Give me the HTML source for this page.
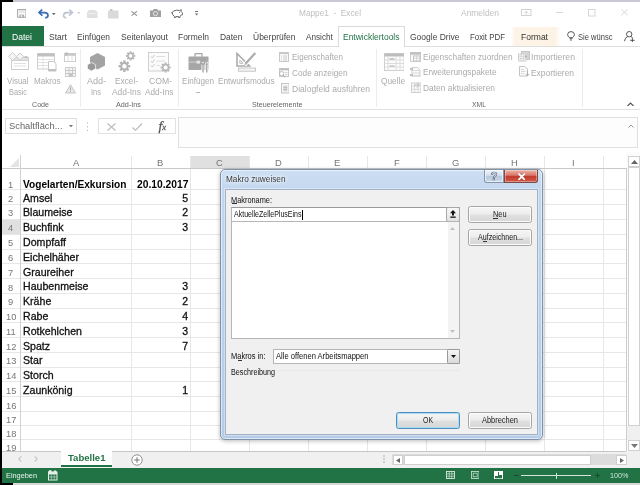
<!DOCTYPE html>
<html lang="de"><head><meta charset="utf-8"><title>Mappe1 - Excel</title>
<style>
html,body{margin:0;padding:0;}
body{width:640px;height:485px;overflow:hidden;position:relative;background:#fff;font-family:'Liberation Sans', sans-serif;}
#app{position:absolute;left:0;top:0;width:640px;height:485px;overflow:hidden;filter:blur(0.4px);}
#app div,#app svg,#app span{position:absolute;box-sizing:border-box;}
.t{white-space:nowrap;transform-origin:0 50%;}
</style></head>
<body><div id="app">
<div style="left:0px;top:0px;width:640px;height:485px;background:#fff;"></div>
<span class="t" style="left:299.00px;top:6.50px;font-size:9.5px;line-height:12px;color:#c0c0c0;transform:scaleX(0.8696);">Mappe1 &nbsp;-&nbsp; Excel</span>
<span class="t" style="left:461.00px;top:6.50px;font-size:9.5px;line-height:12px;color:#c0c0c0;transform:scaleX(0.8882);">Anmelden</span>
<div style="left:1.5px;top:26px;width:42px;height:20.5px;background:#217346;"></div>
<span class="t" style="left:12.00px;top:31.00px;font-size:9px;line-height:12px;color:#fff;transform:scaleX(0.9517);">Datei</span>
<span class="t" style="left:49.00px;top:31.00px;font-size:9px;line-height:12px;color:#444;transform:scaleX(0.9466);">Start</span>
<span class="t" style="left:77.00px;top:31.00px;font-size:9px;line-height:12px;color:#444;transform:scaleX(0.9288);">Einfügen</span>
<span class="t" style="left:121.00px;top:31.00px;font-size:9px;line-height:12px;color:#444;transform:scaleX(0.9486);">Seitenlayout</span>
<span class="t" style="left:178.00px;top:31.00px;font-size:9px;line-height:12px;color:#444;transform:scaleX(0.9389);">Formeln</span>
<span class="t" style="left:220.00px;top:31.00px;font-size:9px;line-height:12px;color:#444;transform:scaleX(0.9363);">Daten</span>
<span class="t" style="left:252.50px;top:31.00px;font-size:9px;line-height:12px;color:#444;transform:scaleX(0.9438);">Überprüfen</span>
<span class="t" style="left:305.70px;top:31.00px;font-size:9px;line-height:12px;color:#444;transform:scaleX(0.9080);">Ansicht</span>
<span class="t" style="left:410.00px;top:31.00px;font-size:9px;line-height:12px;color:#444;transform:scaleX(0.9423);">Google Drive</span>
<span class="t" style="left:470.00px;top:31.00px;font-size:9px;line-height:12px;color:#444;transform:scaleX(0.8747);">Foxit PDF</span>
<div style="left:511px;top:27px;width:50px;height:19.5px;background:linear-gradient(90deg,#fff 0%,#fdf4e7 8%,#fdf3e5 88%,#fff 100%);"></div>
<span class="t" style="left:521.00px;top:31.00px;font-size:9px;line-height:12px;color:#333;transform:scaleX(0.9468);">Format</span>
<span class="t" style="left:578.00px;top:31.00px;font-size:9px;line-height:12px;color:#444;transform:scaleX(0.8408);">Sie wünsc</span>
<div style="left:0px;top:46px;width:640px;height:1px;background:#dddddd;"></div>
<div style="left:338px;top:26px;width:66.5px;height:21px;background:#fff;border:1px solid #dadada;border-bottom:none;"></div>
<span class="t" style="left:343.00px;top:31.00px;font-size:9px;line-height:12px;color:#217346;transform:scaleX(0.9412);">Entwicklertools</span>
<div style="left:0px;top:109.3px;width:640px;height:1px;background:#e2e2e2;"></div>
<div style="left:79.5px;top:49px;width:1px;height:58px;background:#ececec;"></div>
<div style="left:177.5px;top:49px;width:1px;height:58px;background:#ececec;"></div>
<div style="left:376px;top:49px;width:1px;height:58px;background:#ececec;"></div>
<div style="left:582px;top:49px;width:1px;height:58px;background:#ececec;"></div>
<span class="t" style="left:6.55px;top:74.50px;font-size:9px;line-height:12px;color:#ababab;transform:scaleX(0.8826);">Visual</span>
<span class="t" style="left:9.00px;top:86.00px;font-size:9px;line-height:12px;color:#ababab;transform:scaleX(0.8176);">Basic</span>
<span class="t" style="left:33.95px;top:74.50px;font-size:9px;line-height:12px;color:#ababab;transform:scaleX(0.8978);">Makros</span>
<span class="t" style="left:87.00px;top:74.50px;font-size:9px;line-height:12px;color:#ababab;">Add-</span>
<span class="t" style="left:91.00px;top:86.00px;font-size:9px;line-height:12px;color:#ababab;transform:scaleX(0.8322);">Ins</span>
<span class="t" style="left:115.00px;top:74.50px;font-size:9px;line-height:12px;color:#ababab;transform:scaleX(0.9194);">Excel-</span>
<span class="t" style="left:112.00px;top:86.00px;font-size:9px;line-height:12px;color:#ababab;transform:scaleX(0.9345);">Add-Ins</span>
<span class="t" style="left:148.50px;top:74.50px;font-size:9px;line-height:12px;color:#ababab;transform:scaleX(0.9583);">COM-</span>
<span class="t" style="left:145.05px;top:86.00px;font-size:9px;line-height:12px;color:#ababab;transform:scaleX(0.9184);">Add-Ins</span>
<span class="t" style="left:182.00px;top:74.50px;font-size:9px;line-height:12px;color:#ababab;transform:scaleX(0.9006);">Einfügen</span>
<span class="t" style="left:218.05px;top:74.50px;font-size:9px;line-height:12px;color:#ababab;transform:scaleX(0.9108);">Entwurfsmodus</span>
<span class="t" style="left:381.00px;top:74.50px;font-size:9px;line-height:12px;color:#ababab;transform:scaleX(0.9225);">Quelle</span>
<span class="t" style="left:292.00px;top:51.00px;font-size:9px;line-height:12px;color:#ababab;transform:scaleX(0.8940);">Eigenschaften</span>
<span class="t" style="left:292.00px;top:67.00px;font-size:9px;line-height:12px;color:#ababab;transform:scaleX(0.9164);">Code anzeigen</span>
<span class="t" style="left:292.00px;top:83.00px;font-size:9px;line-height:12px;color:#ababab;transform:scaleX(0.9447);">Dialogfeld ausführen</span>
<span class="t" style="left:422.50px;top:50.70px;font-size:9px;line-height:12px;color:#ababab;transform:scaleX(0.9219);">Eigenschaften zuordnen</span>
<span class="t" style="left:422.50px;top:66.00px;font-size:9px;line-height:12px;color:#ababab;transform:scaleX(0.9240);">Erweiterungspakete</span>
<span class="t" style="left:422.50px;top:81.50px;font-size:9px;line-height:12px;color:#ababab;transform:scaleX(0.9345);">Daten aktualisieren</span>
<span class="t" style="left:531.00px;top:51.00px;font-size:9px;line-height:12px;color:#ababab;transform:scaleX(0.9664);">Importieren</span>
<span class="t" style="left:531.00px;top:66.50px;font-size:9px;line-height:12px;color:#ababab;transform:scaleX(0.9341);">Exportieren</span>
<span class="t" style="left:32.00px;top:99.50px;font-size:7.5px;line-height:10px;color:#666;transform:scaleX(0.9477);">Code</span>
<span class="t" style="left:116.00px;top:99.50px;font-size:7.5px;line-height:10px;color:#666;transform:scaleX(0.9668);">Add-Ins</span>
<span class="t" style="left:251.75px;top:99.50px;font-size:7.5px;line-height:10px;color:#666;transform:scaleX(0.9537);">Steuerelemente</span>
<span class="t" style="left:472.00px;top:99.50px;font-size:7.5px;line-height:10px;color:#666;transform:scaleX(0.9078);">XML</span>
<div style="left:0px;top:110.5px;width:640px;height:41.5px;background:#fff;"></div>
<div style="left:5px;top:117.8px;width:72px;height:16.7px;background:#fff;border:1px solid #dedede;"></div>
<span class="t" style="left:9.00px;top:120.30px;font-size:9.5px;line-height:12px;color:#686868;transform:scaleX(0.9836);">Schaltfläch...</span>
<div style="left:98px;top:117.8px;width:78px;height:16.7px;background:#fff;border:1px solid #e2e2e2;"></div>
<div style="left:178px;top:117px;width:460px;height:31px;background:#fdfdfd;border:1px solid #e0e0e0;"></div>
<span class="t" style="left:158.50px;top:116.50px;font-size:13.5px;line-height:18px;color:#555;font-family:'Liberation Serif', serif;font-style:italic;-webkit-text-stroke:0.3px #555;">f</span>
<span class="t" style="left:162.30px;top:122.00px;font-size:8.5px;line-height:11px;color:#555;font-family:'Liberation Serif', serif;font-style:italic;-webkit-text-stroke:0.3px #555;">x</span>
<div style="left:0px;top:155px;width:626px;height:295.5px;background:#fff;"></div>
<div style="left:190px;top:155.5px;width:59px;height:12.5px;background:#e0e0e0;"></div>
<div style="left:1.5px;top:219px;width:19px;height:15px;background:#e0e0e0;"></div>
<div style="left:20.0px;top:156px;width:1px;height:294.5px;background:#e7e7e7;"></div>
<div style="left:130.5px;top:156px;width:1px;height:294.5px;background:#e7e7e7;"></div>
<div style="left:189.5px;top:156px;width:1px;height:294.5px;background:#e7e7e7;"></div>
<div style="left:248.5px;top:156px;width:1px;height:294.5px;background:#e7e7e7;"></div>
<div style="left:307.5px;top:156px;width:1px;height:294.5px;background:#e7e7e7;"></div>
<div style="left:366.5px;top:156px;width:1px;height:294.5px;background:#e7e7e7;"></div>
<div style="left:425.5px;top:156px;width:1px;height:294.5px;background:#e7e7e7;"></div>
<div style="left:485.0px;top:156px;width:1px;height:294.5px;background:#e7e7e7;"></div>
<div style="left:543.5px;top:156px;width:1px;height:294.5px;background:#e7e7e7;"></div>
<div style="left:603.0px;top:156px;width:1px;height:294.5px;background:#e7e7e7;"></div>
<div style="left:1.5px;top:168.0px;width:624px;height:1px;background:#e7e7e7;"></div>
<div style="left:1.5px;top:189.0px;width:624px;height:1px;background:#e7e7e7;"></div>
<div style="left:1.5px;top:203.5px;width:624px;height:1px;background:#e7e7e7;"></div>
<div style="left:1.5px;top:218.5px;width:624px;height:1px;background:#e7e7e7;"></div>
<div style="left:1.5px;top:233.5px;width:624px;height:1px;background:#e7e7e7;"></div>
<div style="left:1.5px;top:248.5px;width:624px;height:1px;background:#e7e7e7;"></div>
<div style="left:1.5px;top:263.0px;width:624px;height:1px;background:#e7e7e7;"></div>
<div style="left:1.5px;top:277.7px;width:624px;height:1px;background:#e7e7e7;"></div>
<div style="left:1.5px;top:292.5px;width:624px;height:1px;background:#e7e7e7;"></div>
<div style="left:1.5px;top:307.5px;width:624px;height:1px;background:#e7e7e7;"></div>
<div style="left:1.5px;top:322.0px;width:624px;height:1px;background:#e7e7e7;"></div>
<div style="left:1.5px;top:337.0px;width:624px;height:1px;background:#e7e7e7;"></div>
<div style="left:1.5px;top:351.5px;width:624px;height:1px;background:#e7e7e7;"></div>
<div style="left:1.5px;top:366.5px;width:624px;height:1px;background:#e7e7e7;"></div>
<div style="left:1.5px;top:381.1px;width:624px;height:1px;background:#e7e7e7;"></div>
<div style="left:1.5px;top:396.0px;width:624px;height:1px;background:#e7e7e7;"></div>
<div style="left:1.5px;top:410.5px;width:624px;height:1px;background:#e7e7e7;"></div>
<div style="left:1.5px;top:424.8px;width:624px;height:1px;background:#e7e7e7;"></div>
<div style="left:1.5px;top:439.2px;width:624px;height:1px;background:#e7e7e7;"></div>
<div style="left:1.5px;top:168.0px;width:624px;height:1px;background:#c9c9c9;"></div>
<div style="left:20px;top:155px;width:1px;height:295.5px;background:#d2d2d2;"></div>
<svg style="left:9.5px;top:157.5px;" width="10" height="10" viewBox="0 0 10 10"><path d="M9 0 L9 9 L0 9 Z" fill="#e4e4e4"/></svg>
<span class="t" style="left:72.62px;top:155.70px;font-size:9.9px;line-height:13px;color:#747474;transform:scaleX(0.9500);">A</span>
<span class="t" style="left:157.37px;top:155.70px;font-size:9.9px;line-height:13px;color:#747474;transform:scaleX(0.9500);">B</span>
<span class="t" style="left:216.11px;top:155.70px;font-size:9.9px;line-height:13px;color:#747474;transform:scaleX(0.9500);">C</span>
<span class="t" style="left:275.11px;top:155.70px;font-size:9.9px;line-height:13px;color:#747474;transform:scaleX(0.9500);">D</span>
<span class="t" style="left:334.37px;top:155.70px;font-size:9.9px;line-height:13px;color:#747474;transform:scaleX(0.9500);">E</span>
<span class="t" style="left:393.63px;top:155.70px;font-size:9.9px;line-height:13px;color:#747474;transform:scaleX(0.9500);">F</span>
<span class="t" style="left:452.10px;top:155.70px;font-size:9.9px;line-height:13px;color:#747474;transform:scaleX(0.9500);">G</span>
<span class="t" style="left:511.36px;top:155.70px;font-size:9.9px;line-height:13px;color:#747474;transform:scaleX(0.9500);">H</span>
<span class="t" style="left:572.44px;top:155.70px;font-size:9.9px;line-height:13px;color:#747474;transform:scaleX(0.9500);">I</span>
<span class="t" style="left:8.21px;top:177.90px;font-size:9.8px;line-height:13px;color:#767676;transform:scaleX(0.9500);">1</span>
<span class="t" style="left:8.21px;top:191.65px;font-size:9.8px;line-height:13px;color:#767676;transform:scaleX(0.9500);">2</span>
<span class="t" style="left:8.21px;top:206.40px;font-size:9.8px;line-height:13px;color:#767676;transform:scaleX(0.9500);">3</span>
<span class="t" style="left:8.21px;top:221.40px;font-size:9.8px;line-height:13px;color:#767676;transform:scaleX(0.9500);">4</span>
<span class="t" style="left:8.21px;top:236.40px;font-size:9.8px;line-height:13px;color:#767676;transform:scaleX(0.9500);">5</span>
<span class="t" style="left:8.21px;top:251.15px;font-size:9.8px;line-height:13px;color:#767676;transform:scaleX(0.9500);">6</span>
<span class="t" style="left:8.21px;top:265.75px;font-size:9.8px;line-height:13px;color:#767676;transform:scaleX(0.9500);">7</span>
<span class="t" style="left:8.21px;top:280.50px;font-size:9.8px;line-height:13px;color:#767676;transform:scaleX(0.9500);">8</span>
<span class="t" style="left:8.21px;top:295.40px;font-size:9.8px;line-height:13px;color:#767676;transform:scaleX(0.9500);">9</span>
<span class="t" style="left:5.62px;top:310.15px;font-size:9.8px;line-height:13px;color:#767676;transform:scaleX(0.9500);">10</span>
<span class="t" style="left:5.97px;top:324.90px;font-size:9.8px;line-height:13px;color:#767676;transform:scaleX(0.9500);">11</span>
<span class="t" style="left:5.62px;top:339.65px;font-size:9.8px;line-height:13px;color:#767676;transform:scaleX(0.9500);">12</span>
<span class="t" style="left:5.62px;top:354.40px;font-size:9.8px;line-height:13px;color:#767676;transform:scaleX(0.9500);">13</span>
<span class="t" style="left:5.62px;top:369.20px;font-size:9.8px;line-height:13px;color:#767676;transform:scaleX(0.9500);">14</span>
<span class="t" style="left:5.62px;top:383.95px;font-size:9.8px;line-height:13px;color:#767676;transform:scaleX(0.9500);">15</span>
<span class="t" style="left:5.62px;top:398.65px;font-size:9.8px;line-height:13px;color:#767676;transform:scaleX(0.9500);">16</span>
<span class="t" style="left:5.62px;top:413.05px;font-size:9.8px;line-height:13px;color:#767676;transform:scaleX(0.9500);">17</span>
<span class="t" style="left:5.62px;top:427.40px;font-size:9.8px;line-height:13px;color:#767676;transform:scaleX(0.9500);">18</span>
<span class="t" style="left:5.62px;top:440.50px;font-size:9.8px;line-height:13px;color:#767676;transform:scaleX(0.9500);">19</span>
<span class="t" style="left:22.50px;top:176.80px;font-size:10.5px;line-height:14px;color:#000;font-weight:bold;transform:scaleX(0.9657);">Vogelarten/Exkursion</span>
<span class="t" style="left:136.50px;top:176.80px;font-size:10.5px;line-height:14px;color:#000;font-weight:bold;transform:scaleX(0.9798);">20.10.2017</span>
<span class="t" style="left:23.00px;top:190.55px;font-size:10.5px;line-height:14px;color:#111;transform:scaleX(1.0100);-webkit-text-stroke:0.3px #111;">Amsel</span>
<span class="t" style="left:182.16px;top:190.55px;font-size:10.5px;line-height:14px;color:#111;-webkit-text-stroke:0.3px #111;">5</span>
<span class="t" style="left:23.00px;top:205.30px;font-size:10.5px;line-height:14px;color:#111;transform:scaleX(1.0100);-webkit-text-stroke:0.3px #111;">Blaumeise</span>
<span class="t" style="left:182.16px;top:205.30px;font-size:10.5px;line-height:14px;color:#111;-webkit-text-stroke:0.3px #111;">2</span>
<span class="t" style="left:23.00px;top:220.30px;font-size:10.5px;line-height:14px;color:#111;transform:scaleX(1.0100);-webkit-text-stroke:0.3px #111;">Buchfink</span>
<span class="t" style="left:182.16px;top:220.30px;font-size:10.5px;line-height:14px;color:#111;-webkit-text-stroke:0.3px #111;">3</span>
<span class="t" style="left:23.00px;top:235.30px;font-size:10.5px;line-height:14px;color:#111;transform:scaleX(1.0100);-webkit-text-stroke:0.3px #111;">Dompfaff</span>
<span class="t" style="left:23.00px;top:250.05px;font-size:10.5px;line-height:14px;color:#111;transform:scaleX(1.0100);-webkit-text-stroke:0.3px #111;">Eichelhäher</span>
<span class="t" style="left:23.00px;top:264.65px;font-size:10.5px;line-height:14px;color:#111;transform:scaleX(1.0100);-webkit-text-stroke:0.3px #111;">Graureiher</span>
<span class="t" style="left:23.00px;top:279.40px;font-size:10.5px;line-height:14px;color:#111;transform:scaleX(1.0100);-webkit-text-stroke:0.3px #111;">Haubenmeise</span>
<span class="t" style="left:182.16px;top:279.40px;font-size:10.5px;line-height:14px;color:#111;-webkit-text-stroke:0.3px #111;">3</span>
<span class="t" style="left:23.00px;top:294.30px;font-size:10.5px;line-height:14px;color:#111;transform:scaleX(1.0100);-webkit-text-stroke:0.3px #111;">Krähe</span>
<span class="t" style="left:182.16px;top:294.30px;font-size:10.5px;line-height:14px;color:#111;-webkit-text-stroke:0.3px #111;">2</span>
<span class="t" style="left:23.00px;top:309.05px;font-size:10.5px;line-height:14px;color:#111;transform:scaleX(1.0100);-webkit-text-stroke:0.3px #111;">Rabe</span>
<span class="t" style="left:182.16px;top:309.05px;font-size:10.5px;line-height:14px;color:#111;-webkit-text-stroke:0.3px #111;">4</span>
<span class="t" style="left:23.00px;top:323.80px;font-size:10.5px;line-height:14px;color:#111;transform:scaleX(1.0100);-webkit-text-stroke:0.3px #111;">Rotkehlchen</span>
<span class="t" style="left:182.16px;top:323.80px;font-size:10.5px;line-height:14px;color:#111;-webkit-text-stroke:0.3px #111;">3</span>
<span class="t" style="left:23.00px;top:338.55px;font-size:10.5px;line-height:14px;color:#111;transform:scaleX(1.0100);-webkit-text-stroke:0.3px #111;">Spatz</span>
<span class="t" style="left:182.16px;top:338.55px;font-size:10.5px;line-height:14px;color:#111;-webkit-text-stroke:0.3px #111;">7</span>
<span class="t" style="left:23.00px;top:353.30px;font-size:10.5px;line-height:14px;color:#111;transform:scaleX(1.0100);-webkit-text-stroke:0.3px #111;">Star</span>
<span class="t" style="left:23.00px;top:368.10px;font-size:10.5px;line-height:14px;color:#111;transform:scaleX(1.0100);-webkit-text-stroke:0.3px #111;">Storch</span>
<span class="t" style="left:23.00px;top:382.85px;font-size:10.5px;line-height:14px;color:#111;transform:scaleX(1.0100);-webkit-text-stroke:0.3px #111;">Zaunkönig</span>
<span class="t" style="left:182.16px;top:382.85px;font-size:10.5px;line-height:14px;color:#111;-webkit-text-stroke:0.3px #111;">1</span>
<div style="left:626px;top:152px;width:14px;height:299px;background:#fbfbfb;"></div>
<div style="left:626px;top:426px;width:14px;height:14px;background:#f0f0f0;"></div>
<div style="left:625.5px;top:168px;width:1px;height:283px;background:#cdcdcd;"></div>
<div style="left:628px;top:156px;width:12px;height:11px;background:#fff;border:1px solid #d0d0d0;"></div>
<svg style="left:630.5px;top:159.5px;" width="7" height="4" viewBox="0 0 7 4"><path d="M0 4 L3.5 0 L7 4 Z" fill="#666"/></svg>
<div style="left:628px;top:167px;width:12px;height:259px;background:#fff;border:1px solid #d0d0d0;"></div>
<div style="left:627.5px;top:440px;width:12.5px;height:11px;background:#fff;border:1px solid #d0d0d0;"></div>
<svg style="left:630.5px;top:444px;" width="7" height="4" viewBox="0 0 7 4"><path d="M0 0 L3.5 4 L7 0 Z" fill="#777"/></svg>
<div style="left:0px;top:450.5px;width:640px;height:17px;background:#f0f0f0;"></div>
<div style="left:0px;top:450.6px;width:626px;height:1px;background:#c6c6c6;"></div>
<div style="left:60.5px;top:450.5px;width:51.5px;height:16px;background:#fff;border-bottom:2px solid #217346;"></div>
<span class="t" style="left:67.60px;top:451.80px;font-size:9.4px;line-height:12px;color:#217346;font-weight:bold;transform:scaleX(1.0182);">Tabelle1</span>
<svg style="left:17.5px;top:455.5px;" width="4" height="6" viewBox="0 0 4 6"><path d="M3.3 0.4 L0.8 3 L3.3 5.6" fill="none" stroke="#c4c4c4" stroke-width="1.1"/></svg>
<svg style="left:33.5px;top:455.5px;" width="4" height="6" viewBox="0 0 4 6"><path d="M0.7 0.4 L3.2 3 L0.7 5.6" fill="none" stroke="#c4c4c4" stroke-width="1.1"/></svg>
<svg style="left:130.5px;top:453.5px;" width="12" height="12" viewBox="0 0 12 12"><circle cx="6" cy="6" r="5.2" fill="#fff" stroke="#888" stroke-width="0.9"/><path d="M3.2 6H8.8M6 3.2V8.8" stroke="#777" stroke-width="1"/></svg>
<div style="left:392px;top:454px;width:234px;height:11px;background:#dcdcdc;"></div>
<div style="left:380px;top:451.5px;width:12px;height:16px;background:#f0f0f0;"></div>
<svg style="left:383px;top:455px;" width="2" height="8" viewBox="0 0 2 8"><circle cx="1" cy="1" r="0.7" fill="#999"/><circle cx="1" cy="4" r="0.7" fill="#999"/><circle cx="1" cy="7" r="0.7" fill="#999"/></svg>
<div style="left:393px;top:454.5px;width:10px;height:10.5px;background:#fff;border:1px solid #cfcfcf;"></div>
<svg style="left:396px;top:457.5px;" width="4" height="5" viewBox="0 0 4 5"><path d="M4 0 L0 2.5 L4 5 Z" fill="#666"/></svg>
<div style="left:404px;top:454.5px;width:187px;height:10.5px;background:#fff;border:1px solid #cfcfcf;"></div>
<div style="left:616px;top:454.5px;width:10.5px;height:10.5px;background:#fff;border:1px solid #cfcfcf;"></div>
<svg style="left:619.5px;top:457.5px;" width="4" height="5" viewBox="0 0 4 5"><path d="M0 0 L4 2.5 L0 5 Z" fill="#666"/></svg>
<div style="left:626.5px;top:451px;width:13.5px;height:16.5px;background:#f0f0f0;"></div>
<div style="left:0px;top:467.5px;width:640px;height:15.5px;background:#217346;"></div>
<span class="t" style="left:6.00px;top:471.00px;font-size:8px;line-height:10px;color:#e8f2ec;transform:scaleX(0.9168);">Eingeben</span>
<span class="t" style="left:610.00px;top:470.70px;font-size:8px;line-height:10px;color:#cfe3d7;transform:scaleX(0.9038);">100%</span>
<div style="left:521px;top:475.3px;width:70px;height:1px;background:#d5e6dc;"></div>
<div style="left:555.5px;top:472.5px;width:1px;height:6.5px;background:#d5e6dc;"></div>
<div style="left:514px;top:475.3px;width:5px;height:1px;background:#164d2e;"></div>
<div style="left:595px;top:475.3px;width:5px;height:1px;background:#164d2e;"></div>
<div style="left:597px;top:473.3px;width:1px;height:5px;background:#164d2e;"></div>
<div style="left:0px;top:483px;width:640px;height:2px;background:#d8d8d8;"></div>
<div style="left:0px;top:483px;width:12.5px;height:2px;background:#000;"></div>
<div style="left:220px;top:169px;width:323px;height:271px;background:linear-gradient(#cddff3 0px,#c2d7ee 20px,#b9d0ea 60%,#b4cce7 100%);border:1px solid #7f92ab;border-radius:5px;box-shadow:0 0 0 1px rgba(255,255,255,0.55) inset,0 1px 4px rgba(0,0,0,0.28);"></div>
<div style="left:225px;top:189px;width:313px;height:245.5px;background:#f0f0f0;border:1px solid #a3b2c4;box-shadow:0 0 0 1px rgba(255,255,255,0.35);"></div>
<span class="t" style="left:225.80px;top:174.20px;font-size:8.8px;line-height:11px;color:#383838;transform:scaleX(0.9361);text-shadow:0 0 4px #fff,0 0 6px #fff;">Makro zuweisen</span>
<div style="left:484px;top:170px;width:20px;height:13px;background:linear-gradient(#eef3f9 0%,#d5e0ed 45%,#b7c8dc 50%,#c9d8e8 100%);border:1px solid #8495ab;border-top:none;border-radius:0 0 0 3px;box-shadow:inset 0 0 0 1px rgba(255,255,255,0.6);"></div>
<span class="t" style="left:490.63px;top:169.30px;font-size:11px;line-height:14px;color:#fff;font-weight:bold;-webkit-text-stroke:0.7px #62748a;">?</span>
<div style="left:504px;top:170px;width:34px;height:13px;background:linear-gradient(#eab4a6 0%,#d9766a 45%,#c4382b 50%,#cf5a48 100%);border:1px solid #7d4945;border-top:none;border-radius:0 0 3px 0;box-shadow:inset 0 0 0 1px rgba(255,255,255,0.35);"></div>
<svg style="left:517.5px;top:172.6px;" width="7.5" height="7.5" viewBox="0 0 7.5 7.5"><path d="M1 1L6.5 6.5M6.5 1L1 6.5" stroke="#6a2a25" stroke-width="2.7" stroke-linecap="round" opacity="0.5"/><path d="M1 1L6.5 6.5M6.5 1L1 6.5" stroke="#fff" stroke-width="1.8" stroke-linecap="round"/></svg>
<span class="t" style="left:231.00px;top:194.70px;font-size:8.4px;line-height:11px;color:#111;transform:scaleX(0.8808);">Makroname:</span>
<div style="left:231.5px;top:203px;width:5.5px;height:1px;background:#333;"></div>
<div style="left:231px;top:207px;width:229px;height:15px;background:#fff;border:1px solid #b4b6bb;border-top-color:#9a9a9a;"></div>
<span class="t" style="left:233.50px;top:209.00px;font-size:8.2px;line-height:11px;color:#111;transform:scaleX(0.8573);">AktuelleZellePlusEins</span>
<div style="left:301.5px;top:209.5px;width:1px;height:10px;background:#000;"></div>
<div style="left:446px;top:207px;width:14px;height:15px;background:linear-gradient(#f8f8f8,#e2e2e2);border:1px solid #a8a8a8;border-radius:2px;"></div>
<svg style="left:449.7px;top:209.7px;" width="6" height="8" viewBox="0 0 6 8"><path d="M3 0L6 3.2H4V5.6H2V3.2H0Z" fill="#111"/><rect x="0.3" y="6.5" width="5.4" height="1.3" fill="#111"/></svg>
<div style="left:231px;top:221px;width:229px;height:118px;background:#fff;border:1px solid #b4b6bb;"></div>
<div style="left:448px;top:222px;width:11px;height:116px;background:#f3f3f3;"></div>
<svg style="left:450px;top:226.5px;" width="5" height="3" viewBox="0 0 5 3"><path d="M0 3L2.5 0L5 3Z" fill="#c0c0c0"/></svg>
<svg style="left:450px;top:329.5px;" width="5" height="3" viewBox="0 0 5 3"><path d="M0 0L2.5 3L5 0Z" fill="#c0c0c0"/></svg>
<div style="left:468px;top:206px;width:64px;height:17px;background:linear-gradient(#f5f5f5 0%,#ededed 48%,#e0e0e0 52%,#d6d6d6 100%);border:1px solid #a6a6a6;border-radius:2.5px;box-shadow:inset 0 0 0 1px #fbfbfb;"></div>
<span class="t" style="left:493.25px;top:209.30px;font-size:8.4px;line-height:11px;color:#1a1a1a;transform:scaleX(0.8780);">Neu</span>
<div style="left:493px;top:218px;width:4.5px;height:1px;background:#333;"></div>
<div style="left:468px;top:229px;width:64px;height:17px;background:linear-gradient(#f5f5f5 0%,#ededed 48%,#e0e0e0 52%,#d6d6d6 100%);border:1px solid #a6a6a6;border-radius:2.5px;box-shadow:inset 0 0 0 1px #fbfbfb;"></div>
<span class="t" style="left:477.50px;top:232.30px;font-size:8.4px;line-height:11px;color:#1a1a1a;transform:scaleX(0.8478);">Aufzeichnen...</span>
<div style="left:482.8px;top:241px;width:4px;height:1px;background:#333;"></div>
<div style="left:396px;top:412px;width:64px;height:17px;background:linear-gradient(#f5f5f5 0%,#ededed 48%,#e0e0e0 52%,#d6d6d6 100%);border:1px solid #4a8fc0;border-radius:2.5px;box-shadow:inset 0 0 0 1px #a9dbf3;"></div>
<span class="t" style="left:423.00px;top:415.30px;font-size:8.4px;line-height:11px;color:#1a1a1a;transform:scaleX(0.8258);">OK</span>
<div style="left:468px;top:412px;width:64px;height:17px;background:linear-gradient(#f5f5f5 0%,#ededed 48%,#e0e0e0 52%,#d6d6d6 100%);border:1px solid #a6a6a6;border-radius:2.5px;box-shadow:inset 0 0 0 1px #fbfbfb;"></div>
<span class="t" style="left:482.00px;top:415.30px;font-size:8.4px;line-height:11px;color:#1a1a1a;transform:scaleX(0.8885);">Abbrechen</span>
<span class="t" style="left:231.00px;top:351.00px;font-size:8.4px;line-height:11px;color:#111;transform:scaleX(0.8928);">Makros in:</span>
<div style="left:238.3px;top:360px;width:4px;height:1px;background:#333;"></div>
<div style="left:273px;top:349px;width:187px;height:15px;background:#fff;border:1px solid #b4b6bb;"></div>
<span class="t" style="left:276.00px;top:351.00px;font-size:8.4px;line-height:11px;color:#111;transform:scaleX(0.9044);">Alle offenen Arbeitsmappen</span>
<div style="left:447px;top:349px;width:13px;height:15px;background:linear-gradient(#f6f6f6,#dadada);border:1px solid #9a9a9a;border-radius:1.5px;"></div>
<svg style="left:451px;top:355px;" width="5" height="3" viewBox="0 0 5 3"><path d="M0 0L2.5 3L5 0Z" fill="#111"/></svg>
<span class="t" style="left:231.00px;top:366.70px;font-size:8.4px;line-height:11px;color:#111;transform:scaleX(0.8591);">Beschreibung</span>
<div style="left:278px;top:369.5px;width:182px;height:1px;background:#e9e9e9;"></div>
<div style="left:0px;top:0px;width:640px;height:1.5px;background:#c9c8d6;"></div>
<div style="left:0px;top:0px;width:13px;height:1.5px;background:#000;"></div>
<div style="left:0px;top:0px;width:1.5px;height:485px;background:#000;"></div>
<svg style="left:16.5px;top:9.2px;" width="9.6" height="8.8" viewBox="0 0 10 9.5"><path d="M0.5 0.5H9.5V9H0.5Z" fill="none" stroke="#a4a4a4" stroke-width="1.1"/><rect x="2" y="1" width="6" height="3.2" fill="#e6e6e6"/><rect x="2.5" y="6" width="5" height="3" fill="#acacac"/><rect x="4" y="6.8" width="1.6" height="1.6" fill="#fff"/></svg>
<svg style="left:37.5px;top:9px;" width="11.5" height="9.5" viewBox="0 0 11.5 9.5"><path d="M4.2 0.6L1 3.6L4.4 6.6" fill="none" stroke="#3a6db3" stroke-width="1.7"/><path d="M1.5 3.6H6.5Q10 3.8 10 6.6Q10 8.6 7.2 8.9" fill="none" stroke="#3a6db3" stroke-width="1.7"/></svg>
<svg style="left:52.3px;top:12.6px;" width="3.6" height="2.2" viewBox="0 0 3.6 2.2"><path d="M0 0L1.8 2.2L3.6 0Z" fill="#666"/></svg>
<svg style="left:62px;top:9px;" width="11.5" height="9.5" viewBox="0 0 11.5 9.5"><path d="M7.3 0.6L10.5 3.6L7.1 6.6" fill="none" stroke="#bfc5d0" stroke-width="1.6"/><path d="M10 3.6H5Q1.5 3.8 1.5 6.6Q1.5 8.6 4.3 8.9" fill="none" stroke="#bfc5d0" stroke-width="1.6"/></svg>
<svg style="left:76.5px;top:12.3px;" width="3.6" height="2.2" viewBox="0 0 3.6 2.2"><path d="M0 0L1.8 2.2L3.6 0Z" fill="#d2d2d2"/></svg>
<svg style="left:87px;top:9.5px;" width="10.5" height="8" viewBox="0 0 10.5 8"><path d="M2 0H8.5L10.5 2.5V8H0V2.5Z" fill="#e0e0e0"/><rect x="1" y="3" width="8.5" height="1" fill="#eee"/></svg>
<svg style="left:108px;top:9px;" width="10.5" height="9.5" viewBox="0 0 10.5 9.5"><rect x="0" y="1.5" width="10.5" height="8" fill="#dadada"/><rect x="2" y="0" width="2.5" height="2" fill="#c8c8c8"/></svg>
<svg style="left:131px;top:11px;" width="6.5" height="5" viewBox="0 0 6.5 5"><path d="M0.5 0.3L6 4.7M6 0.3L0.5 4.7" stroke="#9a9a9a" stroke-width="1.1"/></svg>
<svg style="left:150px;top:9.3px;" width="11" height="8" viewBox="0 0 11 8"><path d="M0 1.6H2.8L3.8 0H7.2L8.2 1.6H11V8H0Z" fill="#a0a0a0"/><circle cx="5.5" cy="4.6" r="2.1" fill="#a0a0a0" stroke="#ececec" stroke-width="0.9"/></svg>
<svg style="left:170.5px;top:8.8px;" width="12" height="9" viewBox="0 0 12 9"><path d="M2.3 2.2Q5.5 0.4 8.6 1.6L10.2 0.6L10.1 2.4Q11.2 3.4 11.5 4.4V5.8H10.4Q9.8 6.9 9 7.2V8.6H7.6V7.6H4.8V8.6H3.4V7.3Q1 5.9 1.4 3.6Q1.5 2.8 2.3 2.2Z" fill="#fff" stroke="#555" stroke-width="0.9"/><circle cx="8.7" cy="3.5" r="0.5" fill="#555"/><path d="M1.3 4.5Q0.3 4.3 0.5 3.3" fill="none" stroke="#555" stroke-width="0.7"/></svg>
<svg style="left:195.3px;top:10.6px;" width="3.2" height="5" viewBox="0 0 3.2 5"><rect x="0" y="0" width="3.2" height="0.9" fill="#666"/><path d="M0 2.4L1.6 4.4L3.2 2.4Z" fill="#666"/></svg>
<svg style="left:521px;top:9px;" width="10.5" height="7" viewBox="0 0 10.5 7"><rect x="0.5" y="0.5" width="9.5" height="6" fill="none" stroke="#d2d2d2"/><path d="M3.2 4.3L5.2 2.3L7.2 4.3M5.2 2.5V5.6" fill="none" stroke="#d2d2d2" stroke-width="0.9"/></svg>
<div style="left:556.3px;top:12.3px;width:7px;height:1px;background:#d6d6d6;"></div>
<svg style="left:588px;top:9px;" width="7.5" height="7.5" viewBox="0 0 7.5 7.5"><rect x="0.5" y="0.5" width="6.5" height="6.5" fill="none" stroke="#d6d6d6"/></svg>
<svg style="left:620.5px;top:9.3px;" width="7" height="6.5" viewBox="0 0 7 6.5"><path d="M0.3 0.3L6.7 6.2M6.7 0.3L0.3 6.2" stroke="#d2d2d2" stroke-width="0.9"/></svg>
<svg style="left:566.5px;top:31.3px;" width="8" height="9.8" viewBox="0 0 8 9.8"><path d="M2.5 6.7Q0.6 5.2 0.6 3.5Q0.8 0.6 4 0.6Q7.2 0.6 7.4 3.5Q7.4 5.2 5.5 6.7Z" fill="#fff" stroke="#444" stroke-width="0.9"/><rect x="2.6" y="7.3" width="2.8" height="0.8" fill="#444"/><rect x="3" y="8.6" width="2" height="0.8" fill="#444"/></svg>
<svg style="left:623.5px;top:30.5px;" width="11" height="11.5" viewBox="0 0 11 11.5"><circle cx="5.2" cy="3.2" r="2.7" fill="none" stroke="#444" stroke-width="0.9"/><path d="M0.5 10.2Q0.8 6.5 3.7 5.6M6.7 5.6Q8 6 8.8 7" fill="none" stroke="#444" stroke-width="0.9"/><path d="M6.2 9.3H10.6M8.4 7.2V11.4" stroke="#444" stroke-width="0.9"/></svg>
<svg style="left:8px;top:52px;" width="21" height="18" viewBox="0 0 21 18"><rect x="3.5" y="5.5" width="17" height="12" fill="#fff" stroke="#cfcfcf"/><rect x="3.5" y="5.5" width="17" height="3" fill="#e2e2e2" stroke="#cfcfcf"/><path d="M6 11.5H18M6 14H18" stroke="#e0e0e0"/><path d="M4.5 0.5L8.8 4.5L4.5 8.5L0.4 4.5Z" fill="#f4f4f4" stroke="#cfcfcf"/><path d="M12 1L15.5 4.5L12 8L8.5 4.5Z" fill="#f4f4f4" stroke="#cfcfcf"/><rect x="16.5" y="4" width="3" height="2" fill="#c4c4c4"/></svg>
<svg style="left:37px;top:53px;" width="20" height="18.5" viewBox="0 0 20 18.5"><rect x="0.5" y="0.5" width="17" height="15.5" fill="#fff" stroke="#cfcfcf"/><rect x="0.5" y="0.5" width="17" height="3" fill="#c0c0c0"/><path d="M1 6.5H17M1 9.5H17M1 12.5H17M6 4V16" stroke="#e2e2e2"/><path d="M11.5 8.5H16.5L19 10.5V18H11.5Z" fill="#fff" stroke="#c6c6c6"/><rect x="11.5" y="16" width="7.5" height="2" fill="#c0c0c0"/></svg>
<svg style="left:64px;top:51.5px;" width="12" height="10" viewBox="0 0 12 10"><rect x="0.5" y="1.5" width="11" height="8" fill="#fff" stroke="#cfcfcf"/><rect x="0.5" y="1.5" width="11" height="2.3" fill="#c8c8c8"/><circle cx="2.5" cy="2" r="1.8" fill="#bdbdbd"/><path d="M4 4V9.5M8 4V9.5" stroke="#e0e0e0"/></svg>
<svg style="left:64.5px;top:67px;" width="11" height="10" viewBox="0 0 11 10"><rect x="0.5" y="0.5" width="10" height="9" fill="#f6f6f6" stroke="#cfcfcf"/><path d="M0.5 3.5H10.5M0.5 6.5H10.5M4 0.5V9.5M7.5 0.5V9.5" stroke="#c8c8c8"/><rect x="4" y="6.5" width="3.5" height="3" fill="#c4c4c4"/></svg>
<svg style="left:64.5px;top:84px;" width="11" height="9.5" viewBox="0 0 11 9.5"><path d="M5.5 0.6L10.5 9H0.5Z" fill="#e8e8e8" stroke="#c4c4c4"/><rect x="5" y="3.3" width="1" height="3" fill="#aaa"/><rect x="5" y="7" width="1" height="1" fill="#aaa"/></svg>
<svg style="left:87px;top:52.5px;" width="18.5" height="18" viewBox="0 0 18.5 18"><path d="M10.5 0L18 4V12.5L10.5 16.5L3 12.5V4Z" fill="#a3a3a3"/><path d="M4.5 9.5L8.6 11.7V15.8L4.5 18L0.4 15.8V11.7Z" fill="#9a9a9a" stroke="#fff" stroke-width="0.7"/></svg>
<svg style="left:116px;top:50px;" width="21" height="22" viewBox="0 0 21 22"><path d="M11.59 16.20L14.20 16.20" stroke="#b4b4b4" stroke-width="2.44"/><path d="M10.66 18.46L12.50 20.30" stroke="#b4b4b4" stroke-width="2.44"/><path d="M8.40 19.39L8.40 22.00" stroke="#b4b4b4" stroke-width="2.44"/><path d="M6.14 18.46L4.30 20.30" stroke="#b4b4b4" stroke-width="2.44"/><path d="M5.21 16.20L2.60 16.20" stroke="#b4b4b4" stroke-width="2.44"/><path d="M6.14 13.94L4.30 12.10" stroke="#b4b4b4" stroke-width="2.44"/><path d="M8.40 13.01L8.40 10.40" stroke="#b4b4b4" stroke-width="2.44"/><path d="M10.66 13.94L12.50 12.10" stroke="#b4b4b4" stroke-width="2.44"/><circle cx="8.4" cy="16.2" r="3.94" fill="#b4b4b4"/><circle cx="8.4" cy="16.2" r="2.2" fill="#fff"/><path d="M17.13 5.90L19.20 5.90" stroke="#b4b4b4" stroke-width="1.93"/><path d="M16.39 7.69L17.85 9.15" stroke="#b4b4b4" stroke-width="1.93"/><path d="M14.60 8.43L14.60 10.50" stroke="#b4b4b4" stroke-width="1.93"/><path d="M12.81 7.69L11.35 9.15" stroke="#b4b4b4" stroke-width="1.93"/><path d="M12.07 5.90L10.00 5.90" stroke="#b4b4b4" stroke-width="1.93"/><path d="M12.81 4.11L11.35 2.65" stroke="#b4b4b4" stroke-width="1.93"/><path d="M14.60 3.37L14.60 1.30" stroke="#b4b4b4" stroke-width="1.93"/><path d="M16.39 4.11L17.85 2.65" stroke="#b4b4b4" stroke-width="1.93"/><circle cx="14.6" cy="5.9" r="3.13" fill="#b4b4b4"/><circle cx="14.6" cy="5.9" r="1.8" fill="#fff"/></svg>
<svg style="left:148px;top:51.5px;" width="23" height="21" viewBox="0 0 23 21"><rect x="0.5" y="0.5" width="20" height="18.5" fill="#fbfbfb" stroke="#cfcfcf"/><path d="M3 4.5L4.3 6L6.5 3M3 9L4.3 10.5L6.5 7.5M3 13.5L4.3 15L6.5 12" fill="none" stroke="#c4c4c4" stroke-width="0.9"/><path d="M8.5 4.5H17M8.5 9H17M8.5 13.5H12" stroke="#dedede"/><path d="M20.35 15.50L22.60 15.50" stroke="#b8b8b8" stroke-width="2.10"/><path d="M19.54 17.44L21.14 19.04" stroke="#b8b8b8" stroke-width="2.10"/><path d="M17.60 18.25L17.60 20.50" stroke="#b8b8b8" stroke-width="2.10"/><path d="M15.66 17.44L14.06 19.04" stroke="#b8b8b8" stroke-width="2.10"/><path d="M14.85 15.50L12.60 15.50" stroke="#b8b8b8" stroke-width="2.10"/><path d="M15.66 13.56L14.06 11.96" stroke="#b8b8b8" stroke-width="2.10"/><path d="M17.60 12.75L17.60 10.50" stroke="#b8b8b8" stroke-width="2.10"/><path d="M19.54 13.56L21.14 11.96" stroke="#b8b8b8" stroke-width="2.10"/><circle cx="17.6" cy="15.5" r="3.40" fill="#b8b8b8"/><circle cx="17.6" cy="15.5" r="2" fill="#fff"/></svg>
<svg style="left:187.5px;top:52.5px;" width="22" height="21" viewBox="0 0 22 21"><path d="M7 3.8V1.2Q7 0.5 7.8 0.5H13.2Q14 0.5 14 1.2V3.8" fill="none" stroke="#a6a6a6" stroke-width="1.3"/><rect x="0.5" y="3.5" width="20" height="13.5" rx="0.8" fill="#a6a6a6"/><rect x="0.5" y="8.6" width="20" height="0.9" fill="#d8d8d8"/><rect x="8.5" y="7.6" width="3.5" height="3" fill="#e4e4e4"/><path d="M15 9.5V20M18.8 9.5V20" stroke="#fff" stroke-width="3"/><path d="M15 10V19.5M18.8 12V19.5" stroke="#a0a0a0" stroke-width="1.3"/><circle cx="15" cy="9.6" r="1.8" fill="none" stroke="#a0a0a0" stroke-width="1.1"/><path d="M18.8 8L17.8 12H19.8Z" fill="#a0a0a0"/></svg>
<svg style="left:195.5px;top:91.5px;" width="4" height="1.2" viewBox="0 0 4 1.2"><rect width="4" height="1.2" fill="#b8b8b8"/></svg>
<svg style="left:236px;top:52px;" width="21" height="20" viewBox="0 0 21 20"><path d="M1 1.5V14H13.5Z" fill="none" stroke="#ababab" stroke-width="1.6"/><path d="M3.8 8V11.3H7.2Z" fill="#fff" stroke="#ababab" stroke-width="0.8"/><path d="M19.5 0.8L8.5 12.8" stroke="#fff" stroke-width="4"/><path d="M19.3 1L9.5 11.7" stroke="#ababab" stroke-width="2.2"/><path d="M9.8 10.4L8 13.3L11 12Z" fill="#ababab"/><rect x="2.5" y="16" width="17" height="3.2" fill="#f4f4f4" stroke="#bdbdbd" stroke-width="0.8"/></svg>
<svg style="left:279px;top:51.5px;" width="10" height="10" viewBox="0 0 10 10"><rect x="0.5" y="0.5" width="9" height="9" fill="#fafafa" stroke="#c8c8c8"/><rect x="0.5" y="0.5" width="9" height="1.6" fill="#c8c8c8"/><path d="M2 4H3M4.2 4H8M2 6H3M4.2 6H8M2 8H3M4.2 8H8" stroke="#c4c4c4" stroke-width="0.9"/></svg>
<svg style="left:277.8px;top:68px;" width="11" height="10" viewBox="0 0 11 10"><rect x="1.5" y="0.5" width="9" height="8" fill="#fafafa" stroke="#c8c8c8"/><rect x="1.5" y="0.5" width="9" height="1.8" fill="#bdbdbd"/><path d="M7 4.5H9.5M7 6.5H9.5" stroke="#ccc" stroke-width="0.9"/><circle cx="3.6" cy="5.6" r="2.1" fill="#fff" stroke="#b4b4b4" stroke-width="0.9"/><path d="M5.2 7.2L7 9.3" stroke="#b4b4b4" stroke-width="1.1"/></svg>
<svg style="left:280.5px;top:83px;" width="8.5" height="10.5" viewBox="0 0 8.5 10.5"><rect x="0.5" y="0.5" width="7.5" height="9.5" fill="#fafafa" stroke="#c4c4c4"/><rect x="2.3" y="2.5" width="4" height="6" fill="#d4d4d4"/><path d="M2.3 4.5H6.3M2.3 6.5H6.3" stroke="#b8b8b8" stroke-width="0.7"/></svg>
<svg style="left:383.5px;top:53px;" width="20.5" height="18" viewBox="0 0 20.5 18"><rect x="0.5" y="0.5" width="19.5" height="17" fill="#fdfdfd" stroke="#cfcfcf"/><rect x="0.5" y="0.5" width="19.5" height="3" fill="#bdbdbd"/><path d="M0.5 7H20M0.5 10.5H20M0.5 14H20M4 3.5V17.5M12 3.5V17.5M16 3.5V17.5" stroke="#dcdcdc"/><rect x="5.5" y="5" width="5" height="2" fill="#c8c8c8"/><rect x="5.5" y="12" width="5" height="2" fill="#d0d0d0"/></svg>
<svg style="left:410px;top:52px;" width="11" height="10" viewBox="0 0 11 10"><rect x="0.5" y="0.5" width="10" height="2.2" fill="#c2c2c2" stroke="#c2c2c2"/><rect x="0.5" y="2.7" width="10" height="6.8" fill="#fafafa" stroke="#cfcfcf"/><rect x="3.5" y="4" width="6.5" height="5" fill="#fff" stroke="#bdbdbd" stroke-width="0.9"/><path d="M3.5 6.3H10M6.7 4V9" stroke="#c8c8c8" stroke-width="0.8"/></svg>
<svg style="left:410px;top:66.5px;" width="11" height="10.5" viewBox="0 0 11 10.5"><path d="M2 0.5H7.5L10 3V10H2Z" fill="#fafafa" stroke="#cfcfcf"/><path d="M2 3.5H10M2 6H10M2 8.5H10" stroke="#d0d0d0" stroke-width="0.8"/><rect x="0" y="1" width="3" height="2" fill="#c0c0c0"/><rect x="0" y="7" width="3" height="2" fill="#c0c0c0"/></svg>
<svg style="left:410.5px;top:81.5px;" width="10.5" height="11" viewBox="0 0 10.5 11"><rect x="0.5" y="1" width="9.5" height="9.5" fill="#fafafa" stroke="#cfcfcf"/><path d="M0.5 4H10M0.5 7.3H10M3.5 1V10.5M7 1V10.5" stroke="#d4d4d4" stroke-width="0.8"/><path d="M6 0.5L8.5 3L6 5.5M8 3H3.5" fill="none" stroke="#b8b8b8" stroke-width="1"/></svg>
<svg style="left:517.5px;top:51px;" width="12" height="10.5" viewBox="0 0 12 10.5"><rect x="3.5" y="0.5" width="8" height="8" fill="#d6d6d6" stroke="#c6c6c6"/><rect x="0.5" y="3" width="7.5" height="7" fill="#fafafa" stroke="#cfcfcf"/><path d="M0.5 5.3H8M0.5 7.6H8M3 3V10M5.5 3V10" stroke="#d0d0d0" stroke-width="0.8"/><path d="M7 4L9.5 5.5L7 7" fill="#b4b4b4"/></svg>
<svg style="left:519px;top:66px;" width="11" height="11" viewBox="0 0 11 11"><path d="M0.5 0.5H6L8.5 3V10H0.5Z" fill="#fafafa" stroke="#c4c4c4"/><path d="M2 3.5H5M2 5.5H6.5M2 7.5H5" stroke="#d0d0d0" stroke-width="0.8"/><path d="M8.5 5V9.5M6.8 8L8.5 10L10.2 8" fill="none" stroke="#b0b0b0" stroke-width="1"/></svg>
<svg style="left:626.5px;top:101.5px;" width="7" height="4.5" viewBox="0 0 7 4.5"><path d="M0.5 4L3.5 1L6.5 4" fill="none" stroke="#555" stroke-width="1.2"/></svg>
<svg style="left:69px;top:125px;" width="4" height="2.4" viewBox="0 0 4 2.4"><path d="M0 0L2 2.4L4 0Z" fill="#777"/></svg>
<svg style="left:86.8px;top:121.5px;" width="1.6" height="9.5" viewBox="0 0 1.6 9.5"><circle cx="0.8" cy="0.9" r="0.7" fill="#aaa"/><circle cx="0.8" cy="4.7" r="0.7" fill="#aaa"/><circle cx="0.8" cy="8.5" r="0.7" fill="#aaa"/></svg>
<svg style="left:107px;top:122.5px;" width="9" height="8" viewBox="0 0 9 8"><path d="M0.5 0.5L8.5 7.5M8.5 0.5L0.5 7.5" stroke="#bcbcbc" stroke-width="1.1"/></svg>
<svg style="left:132px;top:122.5px;" width="10.5" height="8" viewBox="0 0 10.5 8"><path d="M0.5 4.5L3.5 7.3L10 0.5" fill="none" stroke="#bcbcbc" stroke-width="1.2"/></svg>
<svg style="left:628px;top:124px;" width="6" height="4" viewBox="0 0 6 4"><path d="M0.5 3.5L3 1L5.5 3.5" fill="none" stroke="#999" stroke-width="1"/></svg>
<svg style="left:48px;top:470px;" width="9.5" height="10.5" viewBox="0 0 9.5 10.5"><rect x="0.5" y="2" width="8.5" height="8" fill="none" stroke="#e4efe8" stroke-width="1"/><rect x="0.5" y="2" width="8.5" height="2.5" fill="#e4efe8"/><path d="M0.5 7H9M3.3 4.5V10M6.2 4.5V10" stroke="#bfd8ca" stroke-width="0.7"/><circle cx="2.2" cy="1.7" r="1.7" fill="#e4efe8"/><circle cx="7" cy="1.7" r="1.5" fill="#e4efe8"/></svg>
<svg style="left:446.3px;top:470.7px;" width="9" height="8" viewBox="0 0 9 8"><rect x="0.5" y="0.5" width="8" height="7" fill="none" stroke="#dbe9e1" stroke-width="0.9"/><path d="M0.5 2.8H8.5M0.5 5.2H8.5M3.2 0.5V7.5M5.8 0.5V7.5" stroke="#cfe2d6" stroke-width="0.7"/></svg>
<svg style="left:470.5px;top:470.7px;" width="8.5" height="8" viewBox="0 0 8.5 8"><rect x="0.5" y="0.5" width="7.5" height="7" fill="none" stroke="#c3dacd" stroke-width="0.9"/><rect x="2.2" y="2.2" width="4" height="3.6" fill="none" stroke="#c3dacd" stroke-width="0.8"/></svg>
<svg style="left:493.7px;top:470.7px;" width="9" height="8.3" viewBox="0 0 9 8.3"><rect x="0.5" y="0.5" width="8" height="7.3" fill="none" stroke="#fff" stroke-width="1"/><rect x="1" y="1" width="3" height="4" fill="#fff"/><rect x="5" y="1" width="3" height="3" fill="#fff"/></svg>
</div></body></html>
